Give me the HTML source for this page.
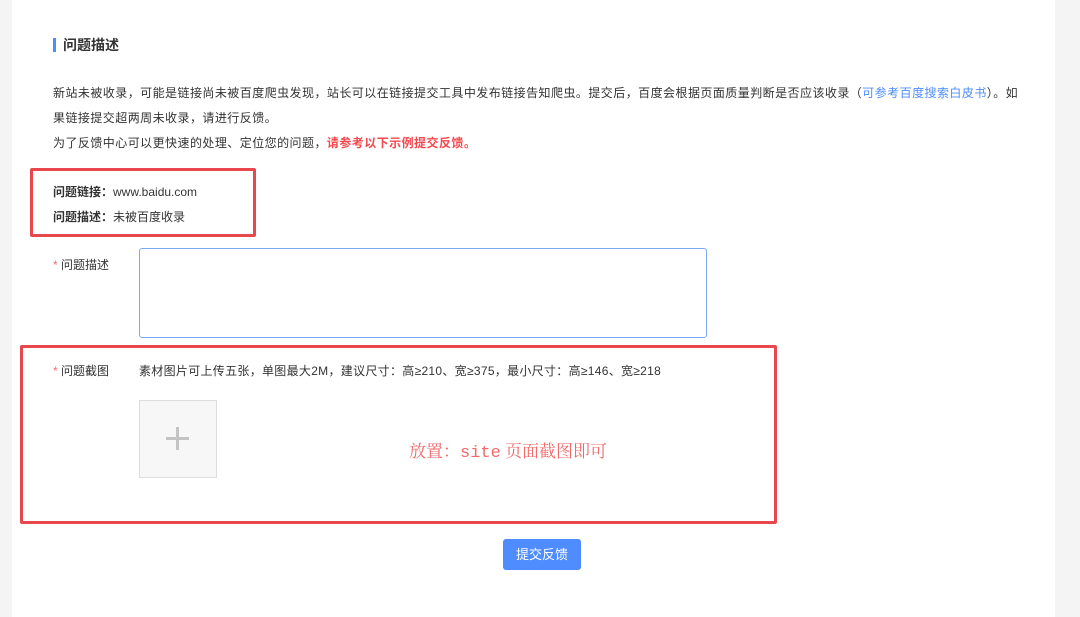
<!DOCTYPE html>
<html><head><meta charset="utf-8"><style>
*{margin:0;padding:0;box-sizing:border-box}
body{width:1080px;height:617px;background:#f4f4f4;position:relative;overflow:hidden;font-family:"Liberation Sans","Noto Sans CJK SC",sans-serif;color:#333;font-size:12px}
.panel{position:absolute;left:12px;top:0;width:1043px;height:617px;background:#fff}
.a{position:absolute;white-space:nowrap}
.bar{position:absolute;left:53px;top:38px;width:3px;height:14px;background:#4e8cff}
.red{position:absolute;border:3px solid #e8484d;border-radius:2px}
.star{color:#f56c6c}
</style></head><body>
<div class="panel"></div>
<div class="bar"></div>
<div class="a" style="left:63px;top:35px;font-size:14px;font-weight:bold;color:#333">问题描述</div>
<div class="a" style="left:53px;top:81px;line-height:25px;letter-spacing:0.45px">新站未被收录，可能是链接尚未被百度爬虫发现，站长可以在链接提交工具中发布链接告知爬虫。提交后，百度会根据页面质量判断是否应该收录（<span style="color:#4e8cff">可参考百度搜索白皮书</span>）。如<br>果链接提交超两周未收录，请进行反馈。<br>为了反馈中心可以更快速的处理、定位您的问题，<span style="color:#f5484d;font-weight:bold">请参考以下示例提交反馈。</span></div>
<div class="red" style="left:30px;top:168px;width:226px;height:69px"></div>
<div class="a" style="left:53px;top:180px;line-height:25px"><b>问题链接：</b>www.baidu.com<br><b>问题描述：</b>未被百度收录</div>
<div class="a" style="left:53px;top:256px"><span class="star">*</span> 问题描述</div>
<div style="position:absolute;left:139px;top:248px;width:568px;height:90px;border:1px solid #7fa8f5;border-radius:3px"></div>
<div class="red" style="left:20px;top:345px;width:757px;height:179px"></div>
<div class="a" style="left:53px;top:362px"><span class="star">*</span> 问题截图</div>
<div class="a" style="left:139px;top:362px;letter-spacing:0.3px">素材图片可上传五张，单图最大2M，建议尺寸：高≥210、宽≥375，最小尺寸：高≥146、宽≥218</div>
<div style="position:absolute;left:139px;top:400px;width:78px;height:78px;background:#f7f7f7;border:1px solid #ddd"></div>
<div style="position:absolute;left:166px;top:437px;width:23px;height:3px;background:#c4c4c4"></div>
<div style="position:absolute;left:176px;top:427px;width:3px;height:23px;background:#c4c4c4"></div>
<div class="a" style="left:409px;top:437px;font-family:'Liberation Serif','Noto Serif CJK SC',serif;font-size:17px;color:#f06a6a">放置：<span style="font-family:'Liberation Mono',monospace">site</span> 页面截图即可</div>
<div style="position:absolute;left:503px;top:539px;width:78px;height:31px;background:#4e8cff;border-radius:3px;color:#fff;font-size:13px;text-align:center;line-height:31px">提交反馈</div>
</body></html>
